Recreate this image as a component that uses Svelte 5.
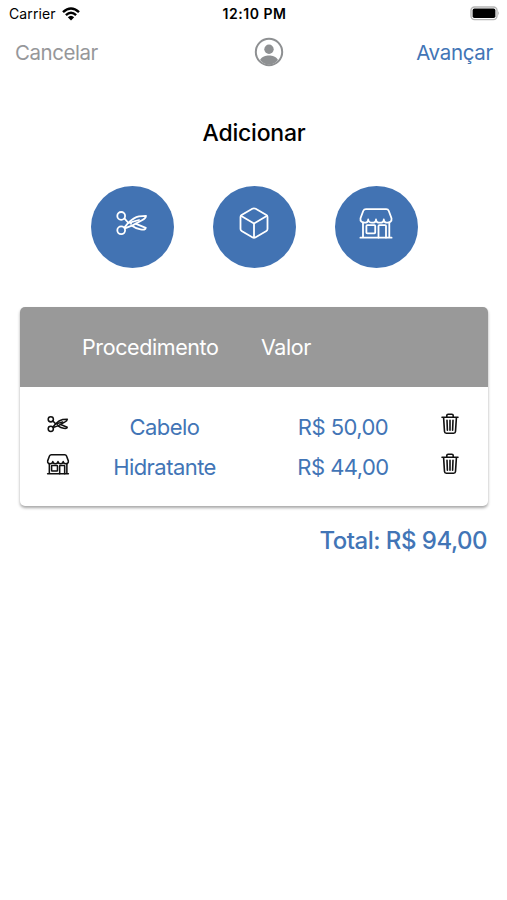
<script>
    const actions = ["cut", "cube", "store"];

    const items = [
        { icon: "cut", name: "Cabelo", price: 50 },
        { icon: "store", name: "Hidratante", price: 44 },
    ];

    const total = items.reduce((sum, item) => sum + item.price, 0);

    function money(value) {
        return "R$ " + value.toFixed(2).replace(".", ",");
    }
</script>

{#snippet icon(name)}
    <svg class="icon" viewBox="0 0 36 36">
        {#if name === "cut"}
            <circle cx="7.2" cy="10.9" r="3.9" />
            <circle cx="7.2" cy="25.3" r="3.9" />
            <path d="M10.3 22.6L14 18.2C17.5 14.7 21 12.2 25 11.4L32 10.9C31.8 13.2 30.5 14 28 15.2L18.5 20.4L10.8 23.4" />
            <path d="M10.4 13.4L13.6 17M22 18.8L31.8 22.8C31.7 24.8 29.5 24.8 26.5 24.4C23 23.9 20.5 22.5 18 20.7M14 18.2L25 15" />
            <circle class="dot" cx="17" cy="18.8" r="1" />
        {:else if name === "cube"}
            <path d="M31.5 24V12a2.25 2.25 0 0 0-1.1-1.95L19.7 3.84a3.4 3.4 0 0 0-3.4 0L5.6 10.05A2.25 2.25 0 0 0 4.5 12v12a2.25 2.25 0 0 0 1.1 1.95l10.7 6.21a3.4 3.4 0 0 0 3.4 0l10.7-6.21A2.25 2.25 0 0 0 31.5 24z" />
            <path d="M4.9 10.8L18 18.5L31.1 10.8M18 32.6V18.5" />
        {:else}
            <path d="M8 4.2H28.2Q30.1 4.2 30.8 6L33.5 13.3C34 16.5 31.8 17.7 29.7 17.7C27.4 17.7 25.8 16.5 25.8 14.4C25.8 16.5 24 17.7 21.9 17.7C19.8 17.7 18 16.5 18 14.4C18 16.5 16.2 17.7 14.1 17.7C12 17.7 10.2 16.5 10.2 14.4C10.2 16.5 8.6 17.7 6.3 17.7C4.2 17.7 2 16.5 2.5 13.3L5.2 6Q6 4.2 8 4.2Z" />
            <path d="M5 17.5V32.5M31.3 17.5V32.5M2.4 32.7H33.6" />
            <rect x="8.4" y="20.2" width="8.8" height="8.2" rx="0.8" />
            <path d="M20.5 32.5V21Q20.5 20.2 21.3 20.2H27.2Q28 20.2 28 21V32.5" />
        {/if}
    </svg>
{/snippet}

<main>
    <div class="status">
        <div class="carrier">
            <span>Carrier</span>
            <svg width="18" height="14" viewBox="0 0 18 14">
                <path class="wave" d="M1 5.1Q9-2.1 17 5.1M3.9 8.1Q9 3.5 14.1 8.1" />
                <path d="M5.8 10.2Q9 7.2 12.2 10.2L9 13.6Z" />
            </svg>
        </div>
        <strong>12:10 PM</strong>
        <svg class="battery" width="30" height="15" viewBox="0 0 30 15">
            <rect class="shell" x="1" y="1" width="26" height="12.6" rx="3.5" />
            <rect x="2.6" y="2.6" width="22.8" height="9.4" rx="1.8" />
            <path class="tip" d="M28.2 5Q30 7.3 28.2 9.6Z" />
        </svg>
    </div>

    <nav>
        <button class="cancel">Cancelar</button>
        <svg width="30" height="30" viewBox="0 0 30 30">
            <circle class="ring" cx="15" cy="15" r="13.2" />
            <circle cx="15" cy="12.2" r="4.7" />
            <path d="M6 23C8 19.5 11.5 18.5 15 18.5S22 19.5 24 23C21.5 26 18.5 27.5 15 27.5S8.5 26 6 23Z" />
        </svg>
        <button class="next">Avançar</button>
    </nav>

    <h1>Adicionar</h1>

    <div class="actions">
        {#each actions as action}
            <button class="round" aria-label={action}>{@render icon(action)}</button>
        {/each}
    </div>

    <section class="card">
        <header>
            <span class="procedure">Procedimento</span>
            <span class="value">Valor</span>
        </header>
        <div class="rows">
            {#each items as item}
                <div class="row">
                    <div class="kind">{@render icon(item.icon)}</div>
                    <span class="name">{item.name}</span>
                    <span class="price">{money(item.price)}</span>
                    <svg class="trash" width="18" height="22" viewBox="0 0 18 22">
                        <path d="M2.6 4.6L3.5 18.5Q3.6 20.2 5.3 20.2H12.7Q14.4 20.2 14.5 18.5L15.4 4.6M1 4.2H17M5.8 4V2.5Q5.8 1.2 7.1 1.2H10.9Q12.2 1.2 12.2 2.5V4M9 7.3V17.2M6 7.3L6.4 17.2M12 7.3L11.6 17.2" />
                    </svg>
                </div>
            {/each}
        </div>
    </section>

    <p class="total">Total: {money(total)}</p>
</main>

<style>
    :global(body) {
        background: #fff;
    }

    main {
        height: 900px;
        overflow: hidden;
        font-family: Inter, "Liberation Sans", sans-serif;
        color: #000;
    }

    svg {
        display: block;
        flex: none;
    }

    button {
        padding: 0;
        border: none;
        background: none;
        font: inherit;
        letter-spacing: inherit;
        cursor: pointer;
    }

    .status {
        display: grid;
        grid-template-columns: 1fr auto 1fr;
        align-items: center;
        height: 27px;
        padding: 0 7px 0 9px;
        font-size: 14px;
        letter-spacing: 0.1px;
    }

    .status strong {
        font-weight: 600;
        letter-spacing: 0.55px;
    }

    .carrier {
        display: flex;
        align-items: center;
        gap: 6px;
    }

    .wave {
        fill: none;
        stroke: #000;
        stroke-width: 2.5;
    }

    .battery {
        justify-self: end;
    }

    .shell {
        fill: #fff;
        stroke: #b5b5b5;
        stroke-width: 1.4;
    }

    .tip {
        fill: #aaa;
    }

    nav {
        display: grid;
        grid-template-columns: 1fr auto 1fr;
        align-items: center;
        height: 50px;
        padding: 0 14px 0 15px;
        font-size: 20.5px;
        letter-spacing: -0.45px;
    }

    nav svg {
        position: relative;
        left: 15px;
        fill: #8e9092;
    }

    nav .ring {
        fill: none;
        stroke: #8e9092;
        stroke-width: 2;
    }

    .cancel {
        justify-self: start;
        color: #96979a;
    }

    .next {
        justify-self: end;
        color: #4275b6;
        letter-spacing: -0.3px;
    }

    h1 {
        margin: 41px 0 0;
        padding-left: 1px;
        font-size: 23px;
        line-height: 30px;
        font-weight: 500;
        letter-spacing: -0.2px;
        text-align: center;
    }

    .actions {
        display: flex;
        justify-content: center;
        gap: 39px;
        margin-top: 38px;
        padding-left: 1px;
    }

    .round {
        display: flex;
        justify-content: center;
        width: 83px;
        height: 82px;
        padding-top: 19px;
        border-radius: 50%;
        background: #4273b3;
        color: #fff;
    }

    .icon {
        width: 36px;
        height: 36px;
        fill: none;
        stroke: currentColor;
        stroke-width: 1.8;
        stroke-linecap: round;
        stroke-linejoin: round;
    }

    .dot {
        fill: currentColor;
        stroke: none;
    }

    .card {
        margin: 39px 19px 0 20px;
        border-radius: 5px;
        background: #fff;
        box-shadow: 0 2px 3px rgba(0, 0, 0, 0.35);
    }

    header {
        display: flex;
        align-items: center;
        height: 80px;
        padding-left: 62px;
        border-radius: 5px 5px 0 0;
        background: #999;
        color: #fff;
        font-size: 21.5px;
        letter-spacing: -0.4px;
    }

    .procedure {
        width: 179px;
    }

    .rows {
        padding: 20px 0 19px;
    }

    .row {
        display: grid;
        grid-template-columns: 77px 135px 222px 1fr;
        align-items: center;
        height: 40px;
        color: #4275b6;
        font-size: 22px;
        letter-spacing: -0.55px;
    }

    .kind {
        padding: 0 0 6px 26px;
        color: #111;
    }

    .kind .icon {
        width: 24px;
        height: 24px;
        stroke-width: 2.3;
    }

    .name,
    .price {
        text-align: center;
    }

    .trash {
        margin: 0 0 6px -13px;
        fill: none;
        stroke: #111;
        stroke-width: 1.6;
        stroke-linecap: round;
        stroke-linejoin: round;
    }

    .total {
        margin: 20px 20px 0;
        color: #4275b6;
        font-size: 24px;
        line-height: 30px;
        font-weight: 500;
        letter-spacing: -0.5px;
        text-align: right;
    }
</style>
